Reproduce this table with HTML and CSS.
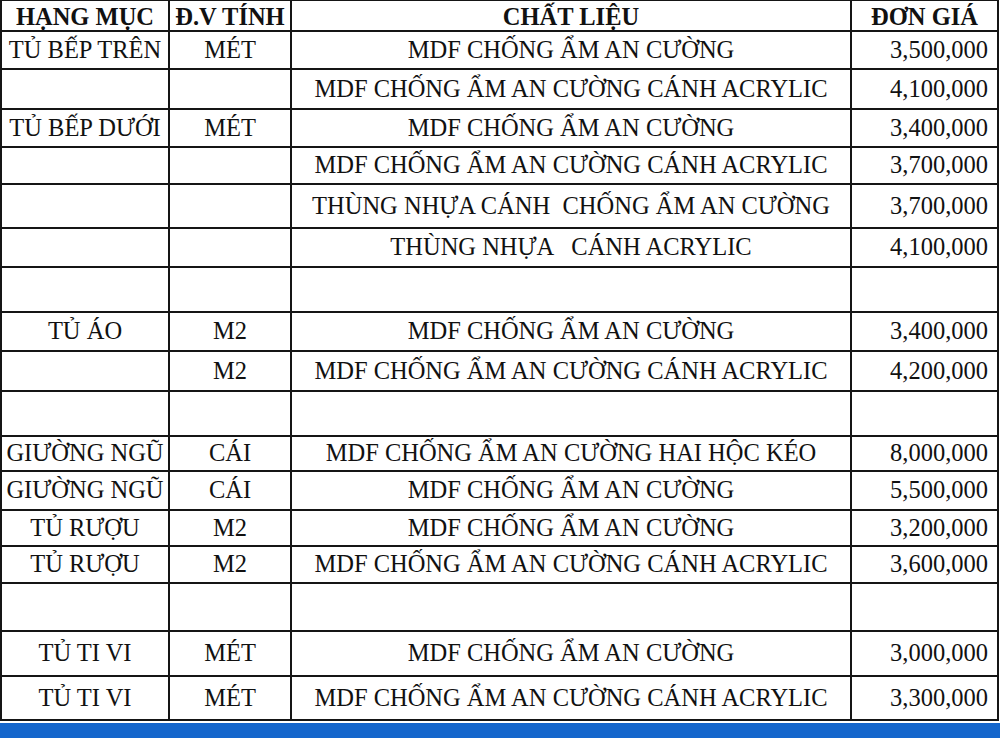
FILE: index.html
```html
<!DOCTYPE html>
<html lang="vi">
<head>
<meta charset="utf-8">
<title>Bảng giá</title>
<link rel="stylesheet" href="styles.css">
</head>
<body>
<div class="page">
<table class="price">
<colgroup><col class="c1"><col class="c2"><col class="c3"><col class="c4"></colgroup>
<thead>
<tr class="h30"><th>HẠNG MỤC</th><th>Đ.V TÍNH</th><th>CHẤT LIỆU</th><th>ĐƠN GIÁ</th></tr>
</thead>
<tbody>
<tr class="h38"><td>TỦ BẾP TRÊN</td><td>MÉT</td><td>MDF CHỐNG ẨM AN CƯỜNG</td><td class="num">3,500,000</td></tr>
<tr class="h40"><td></td><td></td><td>MDF CHỐNG ẨM AN CƯỜNG CÁNH ACRYLIC</td><td class="num">4,100,000</td></tr>
<tr class="h38"><td>TỦ BẾP DƯỚI</td><td>MÉT</td><td>MDF CHỐNG ẨM AN CƯỜNG</td><td class="num">3,400,000</td></tr>
<tr class="h37"><td></td><td></td><td>MDF CHỐNG ẨM AN CƯỜNG CÁNH ACRYLIC</td><td class="num">3,700,000</td></tr>
<tr class="h44"><td></td><td></td><td>THÙNG NHỰA CÁNH&nbsp; CHỐNG ẨM AN CƯỜNG</td><td class="num">3,700,000</td></tr>
<tr class="h39"><td></td><td></td><td>THÙNG NHỰA &nbsp; CÁNH ACRYLIC</td><td class="num">4,100,000</td></tr>
<tr class="h45"><td></td><td></td><td></td><td></td></tr>
<tr class="h39"><td>TỦ ÁO</td><td>M2</td><td>MDF CHỐNG ẨM AN CƯỜNG</td><td class="num">3,400,000</td></tr>
<tr class="h40"><td></td><td>M2</td><td>MDF CHỐNG ẨM AN CƯỜNG CÁNH ACRYLIC</td><td class="num">4,200,000</td></tr>
<tr class="h45"><td></td><td></td><td></td><td></td></tr>
<tr class="h35"><td>GIƯỜNG NGŨ</td><td>CÁI</td><td>MDF CHỐNG ẨM AN CƯỜNG HAI HỘC KÉO</td><td class="num">8,000,000</td></tr>
<tr class="h39"><td>GIƯỜNG NGŨ</td><td>CÁI</td><td>MDF CHỐNG ẨM AN CƯỜNG</td><td class="num">5,500,000</td></tr>
<tr class="h36"><td>TỦ RƯỢU</td><td>M2</td><td>MDF CHỐNG ẨM AN CƯỜNG</td><td class="num">3,200,000</td></tr>
<tr class="h37"><td>TỦ RƯỢU</td><td>M2</td><td>MDF CHỐNG ẨM AN CƯỜNG CÁNH ACRYLIC</td><td class="num">3,600,000</td></tr>
<tr class="h48"><td></td><td></td><td></td><td></td></tr>
<tr class="h45"><td>TỦ TI VI</td><td>MÉT</td><td>MDF CHỐNG ẨM AN CƯỜNG</td><td class="num">3,000,000</td></tr>
<tr class="h44"><td>TỦ TI VI</td><td>MÉT</td><td>MDF CHỐNG ẨM AN CƯỜNG CÁNH ACRYLIC</td><td class="num">3,300,000</td></tr>
</tbody>
</table>
<div class="band"></div>
</div>
</body>
</html>
```

FILE: styles.css
```css
html, body {
  margin: 0;
  padding: 0;
  background: #ffffff;
}
.page {
  width: 1000px;
  height: 738px;
  display: flex;
  flex-direction: column;
  overflow: hidden;
}
.price {
  border-collapse: collapse;
  table-layout: fixed;
  width: 997px;
  margin: -1px 0 0 0;
  font-family: "Liberation Serif", "Times New Roman", serif;
  color: #111111;
  font-size: 24.5px;
}
.c1 { width: 168px; }
.c2 { width: 122px; }
.c3 { width: 560px; }
.c4 { width: 147px; }
.price th, .price td {
  border: 2px solid #151515;
  padding: 0 2px;
  text-align: center;
  vertical-align: middle;
  white-space: nowrap;
  overflow: hidden;
  line-height: 1;
}
.price th {
  font-weight: bold;
  font-size: 24.5px;
  padding-top: 3px;
}
.price td.num {
  text-align: right;
  padding-right: 9px;
}
.h30 { height: 31px; }
.h35 { height: 35px; }
.h36 { height: 36px; }
.h37 { height: 37px; }
.h38 { height: 38px; }
.h39 { height: 39px; }
.h40 { height: 40px; }
.h44 { height: 44px; }
.h45 { height: 45px; }
.h48 { height: 48px; }
.band {
  flex: 1;
  margin-top: 2px;
  background: #1466cc;
}
```
